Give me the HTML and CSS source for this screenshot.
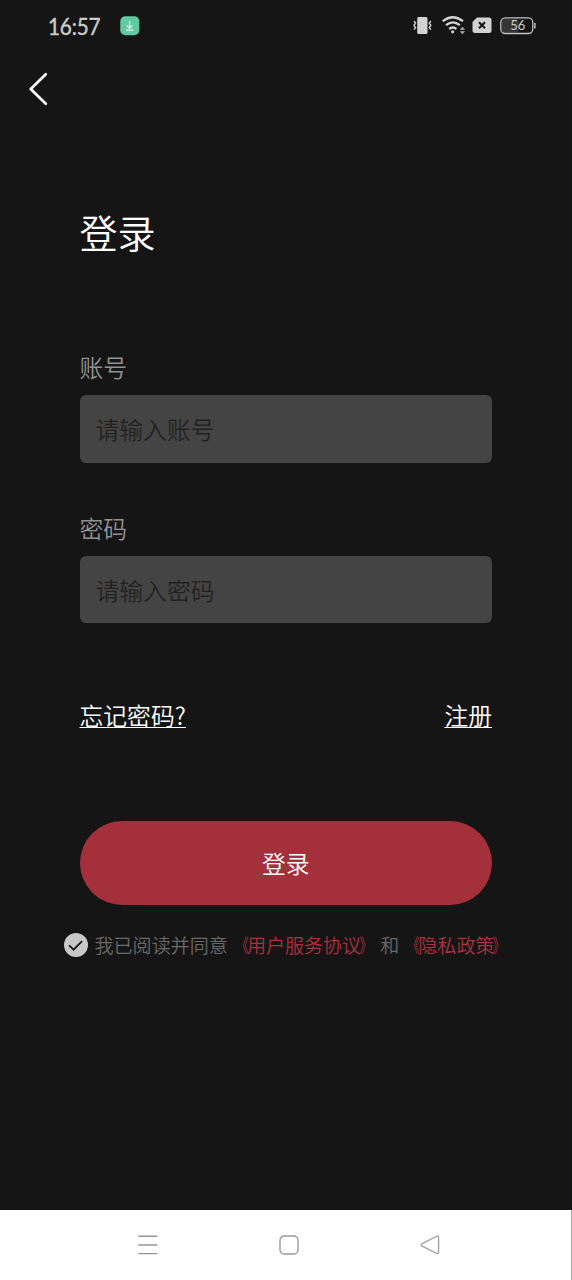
FILE: index.html
```html
<!DOCTYPE html>
<html lang="zh-CN">
<head>
<meta charset="utf-8">
<title>登录</title>
<link rel="stylesheet" href="styles.css">
</head>
<body>
<div class="screen">
  <header class="status">
    <span class="clock">16:57</span>
    <svg class="download" width="20" height="20" viewBox="0 0 20 20"><rect x="0.3" y="0.3" width="19" height="19" rx="5" fill="#61c9a3"/><path d="M9.6 5v7M6.7 9.4l2.9 2.9 2.9-2.9M6 14.2h7.4" fill="none" stroke="#def5ec" stroke-width="1.2"/></svg>
    <svg class="indicators" width="126" height="24" viewBox="412 14 126 24">
      <rect x="417.2" y="17" width="10.3" height="17" rx="1.5" fill="#d2d2d2"/>
      <path d="M414 21l1.5 2-1.5 2.3 1.5 2.2-1.5 2.2M430.8 21l-1.5 2 1.5 2.3-1.5 2.2 1.5 2.2" fill="none" stroke="#c8c8c8" stroke-width="1.5"/>
      <g fill="none" stroke="#d2d2d2" stroke-width="2.3"><path d="M442.7 21.2Q452.8 13.2 463 21.2"/><path d="M446 25.2Q452.8 19.6 459.8 25.2"/><path d="M449.2 29Q452.8 26 456.4 29"/></g>
      <circle cx="452.7" cy="31.8" r="1.6" fill="#d2d2d2"/>
      <path d="M459.7 29.8l2.7-3 2.7 3zM459.7 31.2l2.7 3 2.7-3z" fill="#aaa"/>
      <path d="M477 17.5h12a2.5 2.5 0 0 1 2.5 2.5v10.5a2.5 2.5 0 0 1-2.5 2.5h-14a2.5 2.5 0 0 1-2.5-2.5V22z" fill="#d2d2d2"/>
      <path d="M479 22.3l6 6M485 22.3l-6 6" stroke="#151515" stroke-width="2"/>
      <rect x="502" y="19" width="17" height="13.5" rx="3" fill="#363636"/>
      <rect x="500.8" y="17.8" width="32" height="15.7" rx="4.5" fill="none" stroke="#c4c4c4" stroke-width="1.3"/>
      <path d="M534.9 23v5.5" stroke="#b5b5b5" stroke-width="1.6"/>
      <text class="battery" x="517.8" y="30.3" text-anchor="middle">56</text>
    </svg>
  </header>
  <nav class="topbar">
    <svg width="22" height="36" viewBox="0 0 22 36"><path d="M17.8 3.2L2.7 18l15.1 14.8" fill="none" stroke="#fff" stroke-width="2.7" stroke-linecap="round" stroke-linejoin="round"/></svg>
  </nav>
  <main class="login">
    <h1 class="title">登录</h1>
    <label class="label" for="account">账号</label>
    <input class="field" id="account" type="text" placeholder="请输入账号">
    <label class="label" for="password">密码</label>
    <input class="field" id="password" type="password" placeholder="请输入密码">
    <div class="links"><a>忘记密码?</a><a>注册</a></div>
    <button class="submit" type="button">登录</button>
  </main>
  <div class="agreement">
    <svg width="26" height="26" viewBox="0 0 26 26"><circle cx="13" cy="13" r="12" fill="#c8c8c8"/><path d="M6.1 13.4l4.5 4.2 8.4-8.5" fill="none" stroke="#1c1c1c" stroke-width="1.9"/></svg>
    <p class="terms">我已阅读并同意<span class="policy"><span class="open">《</span>用户服务协议<span class="close">》</span></span>和<span class="policy"><span class="open">《</span>隐私政策<span class="close">》</span></span></p>
  </div>
  <footer class="system-nav">
    <svg width="20" height="22" viewBox="0 0 20 22"><path d="M.3 2.3h19M.3 11h19M.3 19.6h19" stroke="#949494" stroke-width="1.4"/></svg>
    <svg width="20" height="22" viewBox="0 0 20 22"><rect x="1" y="2" width="18" height="18" rx="4.2" fill="none" stroke="#999" stroke-width="1.4"/></svg>
    <svg width="20" height="22" viewBox="0 0 20 22"><path d="M1.8 9.9L16.4 2.5Q18.6 1.6 18.6 4v14q0 2.2-2.2 1.3L1.8 12Q.2 11 1.8 9.9z" fill="none" stroke="#a5a5a5" stroke-width="1.4"/></svg>
  </footer>
</div>
</body>
</html>
```
FILE: styles.css
```css
* { box-sizing: border-box; }
body {
  margin: 0;
  background: #151515;
  font-family: "Noto Sans CJK SC", sans-serif;
}
.screen {
  display: flex;
  flex-direction: column;
  width: 572px;
  height: 1280px;
  background: #151515;
}
.status {
  display: flex;
  align-items: center;
  height: 52px;
  padding: 0 34px 0 48px;
}
.clock {
  width: 72px;
  font: 400 23px/30px Lato, sans-serif;
  letter-spacing: -.2px;
  color: #ccc;
  transform: scaleX(.9);
  transform-origin: 0 50%;
  -webkit-text-stroke: .4px #ccc;
}
.indicators { margin-left: auto; }
.battery {
  font: 13px Lato, sans-serif;
  fill: #ccc;
}
.topbar {
  display: flex;
  height: 74px;
  padding: 19px 28px;
}
.login {
  display: flex;
  flex-direction: column;
  padding: 77px 80px 0 79.5px;
}
.title {
  margin: 0 0 88px;
  font-size: 38.1px;
  font-weight: 350;
  line-height: 58px;
  color: #fff;
}
.label {
  height: 46px;
  font-size: 23.8px;
  font-weight: 350;
  line-height: 36px;
  color: #929292;
}
.field {
  height: 67.5px;
  margin: 0 0 47px;
  padding: 0 16px;
  border: 0;
  border-radius: 6px;
  background: #444;
  font: 350 23.8px/36px "Noto Sans CJK SC", sans-serif;
}
.field::placeholder { color: #222; opacity: 1; }
.links {
  display: flex;
  justify-content: space-between;
  margin-top: 27px;
  font-size: 23.8px;
  font-weight: 350;
  line-height: 36px;
  color: #fff;
}
.links a { text-decoration: underline; text-decoration-thickness: 1px; text-underline-offset: 2px; }
.submit {
  height: 84px;
  margin: 88px 0 0;
  padding: 0;
  border: 0;
  border-radius: 42px;
  background: #a3303b;
  font: 350 23.8px/36px "Noto Sans CJK SC", sans-serif;
  color: #fff;
}
.agreement {
  display: flex;
  align-items: center;
  gap: 5.5px;
  margin-top: 25px;
  padding-left: 63px;
}
.terms {
  margin: 0;
  font-size: 19.06px;
  font-weight: 350;
  line-height: 30px;
  white-space: nowrap;
  color: #696969;
}
.policy { color: #a83240; }
.open, .close { display: inline-block; }
.open { transform: translateX(1.5px) scaleX(.65); transform-origin: 100% 50%; }
.close { transform: translateX(-1.5px) scaleX(.65); transform-origin: 0 50%; }
.system-nav {
  display: flex;
  align-items: center;
  gap: 121px;
  height: 70px;
  margin-top: auto;
  padding-left: 138px;
  border-right: 1px solid #aaa;
  background: #fff;
}
```
